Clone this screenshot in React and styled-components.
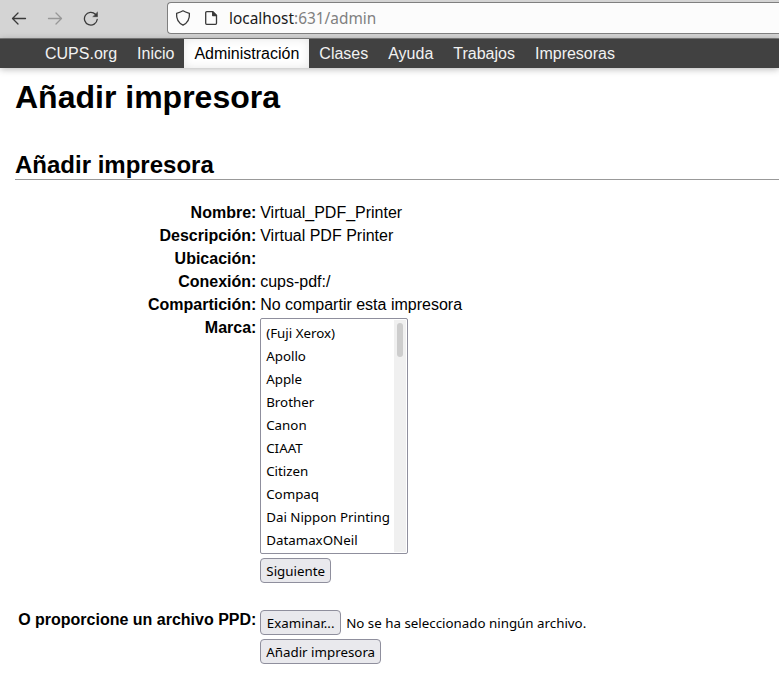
import React from "react";
import styled, { createGlobalStyle } from "styled-components";

const GlobalStyle = createGlobalStyle`
  * { box-sizing: border-box; }
  body {
    margin: 0;
    background: #fff;
    color: #000;
    font: 16px/18px "Liberation Sans", Arial, sans-serif;
    overflow: hidden;
  }
`;

const Page = styled.div`
  width: 100%;
  height: 100vh;
  overflow: hidden;
`;

const Toolbar = styled.header`
  display: flex;
  align-items: flex-start;
  height: 39px;
  padding-top: 2px;
  background: #d4d4d4;
  border-bottom: 1px solid #7f7f7f;
`;

const ToolbarButtons = styled.div`
  display: flex;
  flex: none;
  width: 167px;
  height: 32px;
  align-items: center;
  padding-left: 11px;
  gap: 20px;
`;

const Icon = styled.svg`
  flex: none;
  display: block;
  width: 16px;
  height: 16px;
  fill: none;
  stroke: ${(p) => (p.$dim ? "#979797" : "#3a3a3a")};
  stroke-width: 1.3;
  stroke-linecap: round;
  stroke-linejoin: round;
`;

const UrlBar = styled.div`
  display: flex;
  flex: 1;
  align-items: center;
  height: 32px;
  padding-left: 7px;
  background: #fcfcfc;
  border: 1px solid #7f7f7f;
  border-right: 0;
  border-radius: 4px 0 0 4px;
`;

const UrlIcons = styled.div`
  display: flex;
  gap: 12px;
  width: 54px;
`;

const Url = styled.span`
  padding-top: 2px;
  font: 15.4px/22px "Noto Sans", sans-serif;
  color: #808080;
  white-space: nowrap;
`;

const Host = styled.span`
  color: #1a1a1a;
`;

const Nav = styled.nav`
  display: flex;
  height: 29px;
  padding-left: 35px;
  background: #414141;
  box-shadow: 0 1px 7px rgba(0, 0, 0, 0.3);
`;

const NavItem = styled.a`
  padding: 6px 10px 5px;
  color: ${(p) => (p.$active ? "#000" : "#f2f2f2")};
  background: ${(p) => (p.$active ? "#fff" : "transparent")};
  box-shadow: ${(p) => (p.$active ? "inset 0 0 10px rgba(0,0,0,0.1)" : "none")};
`;

const Content = styled.main`
  padding: 11px 0 0 15px;
`;

const Title = styled.h1`
  margin: 0;
  font-size: 32px;
  line-height: 37px;
`;

const Subtitle = styled.h2`
  margin: 35px 0 22px;
  font-size: 24px;
  line-height: 28px;
  border-bottom: 1px solid #999;
`;

const Form = styled.div`
  display: flex;
  flex-direction: column;
`;

const Row = styled.div`
  display: grid;
  grid-template-columns: 241.4px 1fr;
  column-gap: 3.8px;
  min-height: 23px;
  padding-top: 2px;
  margin-bottom: ${(p) => (p.$spaced ? "26px" : "0")};
`;

const Label = styled.div`
  font-weight: bold;
  text-align: right;
  white-space: nowrap;
`;

const Controls = styled.div`
  display: flex;
  flex-direction: column;
  align-items: flex-start;
  gap: 4px;
  margin-top: -1px;
  font: 13.333px/18px "Noto Sans", sans-serif;
`;

const ListBox = styled.div`
  display: flex;
  justify-content: space-between;
  width: 148px;
  height: 236px;
  padding: 1px;
  background: #fff;
  border: 1px solid #8f8f9d;
  border-radius: 2px;
`;

const Options = styled.div`
  padding: 2px 0 0 4px;
`;

const Option = styled.div`
  height: 23px;
  line-height: 23px;
  white-space: nowrap;
`;

const ScrollTrack = styled.div`
  width: 12px;
  padding: 3px;
  background: #f0f0f0;
`;

const ScrollThumb = styled.div`
  width: 6px;
  height: 34px;
  background: #cdcdcd;
  border-radius: 3px;
`;

const Button = styled.button`
  width: ${(p) => p.$width}px;
  height: 25px;
  padding: 1px 0 0;
  background: #e9e9ed;
  color: #000;
  border: 1px solid #8f8f9d;
  border-radius: 4px;
  font: inherit;
  white-space: nowrap;
`;

const FileInput = styled.div`
  display: flex;
  align-items: center;
  gap: 5px;
`;

const FileStatus = styled.span`
  padding-top: 1px;
`;

const navItems = ["CUPS.org", "Inicio", "Administración", "Clases", "Ayuda", "Trabajos", "Impresoras"];

const details = [
  ["Nombre:", "Virtual_PDF_Printer"],
  ["Descripción:", "Virtual PDF Printer"],
  ["Ubicación:", ""],
  ["Conexión:", "cups-pdf:/"],
  ["Compartición:", "No compartir esta impresora"],
];

const makes = [
  "(Fuji Xerox)", "Apollo", "Apple", "Brother", "Canon",
  "CIAAT", "Citizen", "Compaq", "Dai Nippon Printing", "DatamaxONeil",
];

export default function App() {
  return (
    <Page>
      <GlobalStyle />
      <Toolbar>
        <ToolbarButtons>
          <Icon viewBox="0 0 16 16"><path d="M14.5 8.5H1.5M7 3L1.5 8.5L7 14" /></Icon>
          <Icon viewBox="0 0 16 16" $dim><path d="M1.5 8.5H14.5M9 3l5.5 5.5L9 14" /></Icon>
          <Icon viewBox="0 0 16 16">
            <path d="M12.4 4.2A6.4 6.4 0 1 0 14.2 9.5" />
            <path d="M14.5 2.3v4.400h-4.400z" fill="#3a3a3a" strokeWidth="0.5" />
          </Icon>
        </ToolbarButtons>
        <UrlBar>
          <UrlIcons>
            <Icon viewBox="0 0 16 16">
              <path d="M8 .8C6.2 2 4 2.7 1.6 3.400c-.4 5 1.400 9.300 6.400 11.800C13 12.700 14.800 8.400 14.400 3.400 12 2.700 9.800 2 8 .8z" />
            </Icon>
            <Icon viewBox="0 0 16 16">
              <path d="M3.700 1.700h6l3.800 3.800v7.800a1 1 0 0 1-1 1H3.700a1 1 0 0 1-1-1V2.700a1 1 0 0 1 1-1z" />
              <path d="M9.700 1.700v3.800h3.800z" fill="#3a3a3a" />
            </Icon>
          </UrlIcons>
          <Url><Host>localhost</Host>:631/admin</Url>
        </UrlBar>
      </Toolbar>
      <Nav>
        {navItems.map((item) => (
          <NavItem key={item} $active={item === "Administración"}>{item}</NavItem>
        ))}
      </Nav>
      <Content>
        <Title>Añadir impresora</Title>
        <Subtitle>Añadir impresora</Subtitle>
        <Form>
          {details.map(([label, value]) => (
            <Row key={label}>
              <Label>{label}</Label>
              <div>{value}</div>
            </Row>
          ))}
          <Row $spaced>
            <Label>Marca:</Label>
            <Controls>
              <ListBox>
                <Options>
                  {makes.map((make) => <Option key={make}>{make}</Option>)}
                </Options>
                <ScrollTrack><ScrollThumb /></ScrollTrack>
              </ListBox>
              <Button $width={71}>Siguiente</Button>
            </Controls>
          </Row>
          <Row>
            <Label>O proporcione un archivo PPD:</Label>
            <Controls>
              <FileInput>
                <Button $width={81}>Examinar...</Button>
                <FileStatus>No se ha seleccionado ningún archivo.</FileStatus>
              </FileInput>
              <Button $width={121}>Añadir impresora</Button>
            </Controls>
          </Row>
        </Form>
      </Content>
    </Page>
  );
}
